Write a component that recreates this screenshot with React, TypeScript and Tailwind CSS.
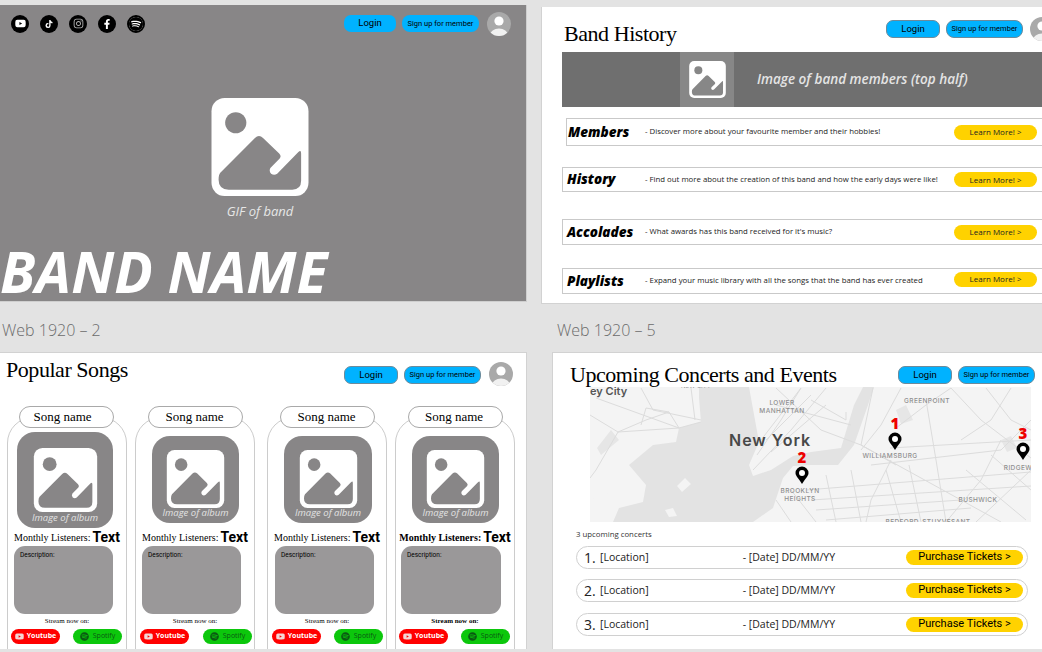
import { FaFacebookF, FaInstagram, FaSpotify, FaTiktok, FaYoutube } from 'react-icons/fa';

const TITLE = "font-['Liberation_Serif',serif] text-black";
const HEADING = `${TITLE} text-[22px] leading-[26px] tracking-[-0.45px] whitespace-nowrap`;

function ImageIcon({ className, tone }: { className: string; tone: string }) {
  return (
    <svg viewBox="0 0 96 97" className={className}>
      <rect width="96" height="97" rx="13" fill="#fff" />
      <circle cx="24" cy="24.5" r="10.5" fill={tone} />
      <path
        d="M8.7 74 L43 39.5 Q47 35.5 51 39.5 L67 55 Q69.5 57.5 67.5 60 L58.5 69 Q56.5 72 59 75 Q62 77 65 75 L86 53.5 Q88.7 51 88.7 55 L88.7 82 Q88.7 90.7 80 90.7 L17 90.7 Q7 90.7 7 81 Q7 76 8.7 74 Z"
        fill={tone}
      />
    </svg>
  );
}

function Avatar() {
  return (
    <svg viewBox="0 0 24 24" className="w-6 h-6 shrink-0">
      <clipPath id="avatar-clip">
        <circle cx="12" cy="12" r="12" />
      </clipPath>
      <g clipPath="url(#avatar-clip)">
        <rect width="24" height="24" fill="#a9a9a9" />
        <circle cx="12" cy="9" r="4.6" fill="#fff" />
        <ellipse cx="12" cy="23" rx="9" ry="6.5" fill="#f1f1f1" />
      </g>
    </svg>
  );
}

function AuthButtons({ outlined, className }: { outlined: boolean; className: string }) {
  const border = outlined ? 'border border-[#6d8b9b]' : '';
  return (
    <div className={`flex items-center font-['Roboto',sans-serif] text-black shrink-0 ${className}`}>
      <div className={`h-[18px] rounded-[7px] bg-[#00b2ff] flex items-center justify-center text-[9.5px] ${border} w-[54px]`}>
        Login
      </div>
      <div className={`ml-[6px] h-[18px] rounded-[8px] bg-[#00b2ff] flex items-center justify-center text-[7.5px] ${border} w-[77px]`}>
        Sign up for member
      </div>
    </div>
  );
}

const socials = [
  { key: 'yt', node: <FaYoutube className="w-[11px] h-[11px] text-white" /> },
  { key: 'tt', node: <FaTiktok className="w-[8px] h-[8px] text-white" /> },
  { key: 'ig', node: <FaInstagram className="w-[11px] h-[11px] text-[#b8b8b8]" /> },
  { key: 'fb', node: <FaFacebookF className="w-[10px] h-[10px] text-white" /> },
];

function HeroBoard() {
  return (
    <div className="h-[297px] bg-[#888687] border-r border-b border-[#cfcfcf] flex flex-col overflow-hidden">
      <div className="flex items-center pl-[11px] pr-[15px] h-[38px] shrink-0">
        <div className="flex items-center gap-[11px] -mt-[1px]">
          {socials.map((s) => (
            <div key={s.key} className="w-[18px] h-[18px] rounded-full bg-black flex items-center justify-center">
              {s.node}
            </div>
          ))}
          <div className="w-[18px] h-[18px] rounded-full bg-white border-2 border-black flex items-center justify-center">
            <FaSpotify className="w-[16px] h-[16px] text-black" />
          </div>
        </div>
        <AuthButtons outlined={false} className="ml-auto -mt-[1px] [&>div:first-child]:w-[52px] [&>div]:h-[17px]" />
        <div className="ml-[8px]">
          <Avatar />
        </div>
      </div>
      <div className="flex flex-col items-center mt-[55px] -ml-[6px]">
        <ImageIcon className="w-[98px] h-[98px]" tone="#888687" />
        <div className="mt-[6px] text-[13px] italic text-[#e6e6e6]">GIF of band</div>
      </div>
      <div className="mt-[19px] text-[57px] leading-[60px] font-bold italic text-white whitespace-nowrap">
        BAND NAME
      </div>
    </div>
  );
}

const historyRows = [
  { title: 'Members', text: 'Discover more about your favourite member and their hobbies!', box: 'mt-[11px] ml-[24px] w-[497px] h-[28px]', pad: 'w-[78px] pl-[1px]', btn: '' },
  { title: 'History', text: 'Find out more about the creation of this band and how the early days were like!', box: 'mt-[21px] ml-[20px] w-[501px] h-[25px]', pad: 'w-[82px] pl-[4px]', btn: '' },
  { title: 'Accolades', text: "What awards has this band received for it's music?", box: 'mt-[27px] ml-[20px] w-[501px] h-[26px]', pad: 'w-[82px] pl-[4px]', btn: '' },
  { title: 'Playlists', text: 'Expand your music library with all the songs that the band has ever created', box: 'mt-[23px] ml-[20px] w-[501px] h-[26px]', pad: 'w-[82px] pl-[4px]', btn: '-mt-[4px]' },
];

function HistoryBoard() {
  return (
    <div className="h-[297px] w-[520px] bg-white border-b border-l border-[#d2d2d2] overflow-hidden flex flex-col">
      <div className="flex items-start h-[45px] pl-[22px] shrink-0">
        <div className="w-[322px] shrink-0 mt-[14px]">
          <div className={HEADING}>Band History</div>
        </div>
        <AuthButtons outlined className="mt-[13px]" />
        <div className="ml-[7px] mt-[10px]">
          <Avatar />
        </div>
      </div>
      <div className="ml-[20px] h-[55px] bg-[#6f6f6f] flex items-stretch shrink-0">
        <div className="ml-[118px] w-[54px] bg-[#878787] flex items-center justify-center">
          <ImageIcon className="w-[37px] h-[37px]" tone="#878787" />
        </div>
        <div className="ml-[23px] self-center text-[13.5px] font-semibold italic text-[#e4e4e4] whitespace-nowrap">
          Image of band members (top half)
        </div>
      </div>
      {historyRows.map((row) => (
        <div key={row.title} className={`shrink-0 flex items-center border border-r-0 border-[#c9c9c9] pr-[26px] ${row.box}`}>
          <div className={`text-[13.5px] font-extrabold italic text-black shrink-0 whitespace-nowrap ${row.pad}`}>{row.title}</div>
          <div className="text-[7.8px] text-[#222] whitespace-nowrap">- {row.text}</div>
          <div className={`ml-auto shrink-0 w-[83px] h-[15px] rounded-full bg-[#ffd200] flex items-center justify-center text-[8px] text-[#222] ${row.btn}`}>
            Learn More! &gt;
          </div>
        </div>
      ))}
    </div>
  );
}

const songs = [
  { card: 'ml-[7px]', pill: 'left-[11px] pr-[8px]', slot: 'pt-[14px] pl-[9px]', art: 'w-[96px] h-[96px]', icon: 'w-[65px] h-[64px] mt-[16px]', label: 'text-[9.5px] -mt-[1px]', desc: 'ml-[6px] w-[99px]', yt: 'ml-[3px]', sp: 'ml-[13px]', heavy: false },
  { card: 'ml-[8px]', pill: 'left-[12px] pr-[2px]', slot: 'pt-[18px] pl-[16px]', art: 'w-[87px] h-[87px]', icon: 'w-[59px] h-[58px] mt-[14px]', label: 'text-[9.5px] -mt-[2px]', desc: 'ml-[6px] w-[99px]', yt: 'ml-[4px]', sp: 'ml-[14px]', heavy: false },
  { card: 'ml-[12px]', pill: 'left-[12px] pr-[2px]', slot: 'pt-[18px] pl-[16px]', art: 'w-[88px] h-[87px]', icon: 'w-[59px] h-[58px] mt-[14px]', label: 'text-[9.5px] -mt-[2px]', desc: 'ml-[7px] w-[99px]', yt: 'ml-[4px]', sp: 'ml-[13px]', heavy: false },
  { card: 'ml-[8px]', pill: 'left-[12px] pr-[3px]', slot: 'pt-[18px] pl-[16px]', art: 'w-[87px] h-[87px]', icon: 'w-[59px] h-[58px] mt-[14px]', label: 'text-[9.5px] -mt-[2px]', desc: 'ml-[5px] w-[100px]', yt: 'ml-[3px]', sp: 'ml-[13px]', heavy: true },
];

function SongCard({ song }: { song: (typeof songs)[number] }) {
  return (
    <div className={`relative w-[120px] h-[260px] shrink-0 rounded-t-[26px] border border-[#cccccc] ${song.card}`}>
      <div className={`absolute -top-[12px] w-[95px] h-[22px] rounded-full bg-white border border-[#a9a9a9] flex items-center justify-center ${TITLE} text-[13px] ${song.pill}`}>
        Song name
      </div>
      <div className={`h-[111px] ${song.slot}`}>
        <div className={`rounded-[18px] bg-[#888687] flex flex-col items-center ${song.art}`}>
          <ImageIcon className={song.icon} tone="#888687" />
          <div className={`italic text-[#e2e2e2] whitespace-nowrap ${song.label}`}>Image of album</div>
        </div>
      </div>
      <div className="h-[17px] flex items-center justify-center whitespace-nowrap">
        <span className={`${TITLE} text-[10px] ${song.heavy ? 'font-bold' : ''}`}>Monthly Listeners:</span>
        <span className="ml-[2px] font-['Roboto',sans-serif] text-[14px] font-bold text-black">Text</span>
      </div>
      <div className={`h-[68px] rounded-[11px] bg-[#9a9899] pl-[6px] pt-[5px] text-[6.5px] text-black font-['Roboto',sans-serif] ${song.desc}`}>
        Description:
      </div>
      <div className={`mt-[1px] h-[12px] flex items-center justify-center ${TITLE} text-[7px] ${song.heavy ? 'font-bold' : ''}`}>
        Stream now on:
      </div>
      <div className="flex items-center mt-[2px]">
        <div className={`w-[49px] h-[15px] rounded-full bg-[#ff0000] flex items-center justify-center gap-[3px] text-[7px] font-bold text-white ${song.yt}`}>
          <FaYoutube className="w-[9px] h-[9px] text-[#f4d6d6]" />
          Youtube
        </div>
        <div className={`w-[49px] h-[15px] rounded-full bg-[#0cc70c] flex items-center justify-center gap-[4px] text-[7px] text-[#0a5a12] ${song.sp}`}>
          <FaSpotify className="w-[9px] h-[9px] text-[#0a5a12]" />
          Spotify
        </div>
      </div>
    </div>
  );
}

function SongsBoard() {
  return (
    <div className="h-[297px] bg-white border-t border-r border-[#d2d2d2] overflow-hidden flex flex-col">
      <div className="h-[52px] shrink-0 flex items-start pl-[6px]">
        <div className="w-[338px] shrink-0 mt-[4px]">
          <div className={HEADING}>Popular Songs</div>
        </div>
        <AuthButtons outlined className="mt-[13px]" />
        <div className="ml-[8px] mt-[9px]">
          <Avatar />
        </div>
      </div>
      <div className="flex mt-[12px]">
        {songs.map((song, i) => (
          <SongCard key={i} song={song} />
        ))}
      </div>
    </div>
  );
}

const roads = [
  'M589 415 L617 432 L678 428 L700 422',
  'M617 432 L595 470 L589 478',
  'M595 398 L678 428 L668 412 L645 408 L640 425',
  'M640 388 L652 410 L700 420',
  'M690 388 L694 420',
  'M617 432 L645 420 L668 412',
  'M760 440 L800 388',
  'M752 470 L790 430 L825 388',
  'M756 455 L780 420 L800 388',
  'M765 440 L810 395',
  'M770 452 L825 405',
  'M775 388 L820 430 L860 445 L895 465',
  'M775 405 L850 425',
  'M810 400 L845 420',
  'M845 420 L845 412',
  'M860 445 L872 388',
  'M900 388 L880 425 L860 450',
  'M895 428 L925 405 L950 388',
  'M889 448 L1030 440',
  'M870 465 L1000 450 L1030 420',
  'M860 445 L960 500 L1000 522',
  'M890 460 L870 500 L865 522',
  'M925 400 L935 460 L945 522',
  'M950 388 L980 420 L1030 458',
  'M1000 440 L980 480 L945 522',
  'M1030 470 L975 522',
  'M990 455 L1030 490',
  'M965 470 L1025 520',
  'M805 490 L1030 472',
  'M810 500 L1030 486',
  'M815 510 L960 500',
  'M825 520 L970 508',
  'M825 475 L835 522',
  'M850 470 L860 522',
  'M885 470 L900 522',
  'M908 465 L920 522',
  'M790 490 L815 522',
  'M775 500 L790 522',
  'M985 388 L1010 420 L1030 430',
  'M1010 388 L990 420 L960 440',
];

function MapPin({ x, y, n }: { x: number; y: number; n: string }) {
  return (
    <g>
      <text x={x} y={y - 4} textAnchor="middle" fontFamily="'Open Sans', sans-serif" fontWeight={800} fontSize="15" fill="#ee0000">
        {n}
      </text>
      <path
        d={`M${x} ${y + 17} C${x - 3} ${y + 12} ${x - 6.5} ${y + 9} ${x - 6.5} ${y + 6} A6.5 6.5 0 1 1 ${x + 6.5} ${y + 6} C${x + 6.5} ${y + 9} ${x + 3} ${y + 12} ${x} ${y + 17} Z`}
        fill="#000"
      />
      <circle cx={x} cy={y + 6} r="3" fill="#fff" />
    </g>
  );
}

function ConcertMap() {
  const label = "'Inter', sans-serif";
  return (
    <svg viewBox="589 387 441 135" className="ml-[37px] w-[441px] h-[135px] block shrink-0">
      <rect x="589" y="387" width="441" height="135" fill="#f4f4f4" />
      <path
        d="M698 387 L698 398 L700 422 L678 428 L675 442 L652 445 L628 465 L645 485 L642 502 L618 508 L612 522 L752 522 L772 508 L782 478 L792 466 L810 465 L837 465 L853 445 L867 405 L873 387 L862 387 L853 405 L840 448 L810 452 L792 456 L770 470 L752 476 L748 465 L758 442 L748 387 Z"
        fill="#e3e3e3"
      />
      <path d="M676 486 L684 478 L690 484 L681 492 Z M664 510 L672 508 L676 516 L668 517 Z M589 500 L610 492 L620 500 L605 522 L589 522 Z" fill="#f4f4f4" />
      <path d="M610 430 L618 440 L600 455 L596 448 Z M1000 440 L1010 436 L1016 448 L1006 452 Z M895 410 L905 405 L912 420 L900 424 Z" fill="#e6e6e6" />
      {roads.map((d) => (
        <path key={d} d={d} fill="none" stroke="#dcdcdc" strokeWidth="1" />
      ))}
      <text x="589" y="395" fontFamily={label} fontWeight={600} fontSize="11" fill="#555">ey City</text>
      <text x="680" y="388" fontFamily={label} fontSize="6" fill="#999">NEW CITY</text>
      <text x="728" y="446" fontFamily={label} fontWeight={600} fontSize="16" letterSpacing="1" fill="#484848">New York</text>
      <g fontFamily={label} fontWeight={500} fontSize="6.5" fill="#8f8f8f" textAnchor="middle" letterSpacing="0.4">
        <text x="781" y="405">LOWER</text>
        <text x="781" y="413">MANHATTAN</text>
        <text x="926" y="403">GREENPOINT</text>
        <text x="889" y="458">WILLIAMSBURG</text>
        <text x="799" y="493">BROOKLYN</text>
        <text x="799" y="501">HEIGHTS</text>
        <text x="977" y="502">BUSHWICK</text>
        <text x="1017" y="470">RIDGEW</text>
        <text x="927" y="524">BEDFORD-STUYVESANT</text>
      </g>
      <MapPin x={894} y={433} n="1" />
      <MapPin x={801} y={467} n="2" />
      <MapPin x={1022} y={443} n="3" />
    </svg>
  );
}

const concerts = [
  { n: '1.', box: 'mt-[5px]' },
  { n: '2.', box: 'mt-[10px]' },
  { n: '3.', box: 'mt-[11px]' },
];

function ConcertsBoard() {
  return (
    <div className="h-[297px] w-[520px] bg-white border-t border-l border-[#d2d2d2] overflow-hidden flex flex-col">
      <div className="h-[34px] shrink-0 flex items-start pl-[17px]">
        <div className="w-[328px] shrink-0 mt-[9px]">
          <div className={HEADING}>Upcoming Concerts and Events</div>
        </div>
        <AuthButtons outlined className="mt-[13px] relative z-10" />
      </div>
      <ConcertMap />
      <div className="ml-[23px] mt-[7px] h-[12px] shrink-0 flex items-center text-[7.8px] text-[#333]">3 upcoming concerts</div>
      {concerts.map((c) => (
        <div key={c.n} className={`ml-[23px] w-[452px] h-[23px] rounded-full border border-[#d0d0d0] flex items-center text-[10.5px] text-[#222] shrink-0 ${c.box}`}>
          <span className="ml-[7px] w-[16px] text-[14px]">{c.n}</span>
          <span>[Location]</span>
          <span className="ml-[94px]">- [Date] DD/MM/YY</span>
          <div className="ml-auto mr-[4px] w-[117px] h-[15px] rounded-full bg-[#ffd200] flex items-center justify-center font-['Roboto',sans-serif] text-[11px] text-black">
            Purchase Tickets &gt;
          </div>
        </div>
      ))}
    </div>
  );
}

export default function App() {
  return (
    <div className="w-[1042px] h-[652px] overflow-hidden bg-[#e3e3e3] font-['Open_Sans',sans-serif] flex">
      <div className="w-[527px] shrink-0">
        <div className="mt-[5px]">
          <HeroBoard />
        </div>
        <div className="h-[50px] pl-[2px] pt-[17px] text-[16px] leading-[22px] font-light text-[#6b6b6b]">Web 1920 – 2</div>
        <SongsBoard />
      </div>
      <div className="ml-[14px] flex-1 min-w-0 overflow-hidden">
        <div className="mt-[7px]">
          <HistoryBoard />
        </div>
        <div className="h-[48px] pl-[16px] pt-[15px] text-[16px] leading-[22px] font-light text-[#6b6b6b]">Web 1920 – 5</div>
        <div className="ml-[11px]">
          <ConcertsBoard />
        </div>
      </div>
    </div>
  );
}
